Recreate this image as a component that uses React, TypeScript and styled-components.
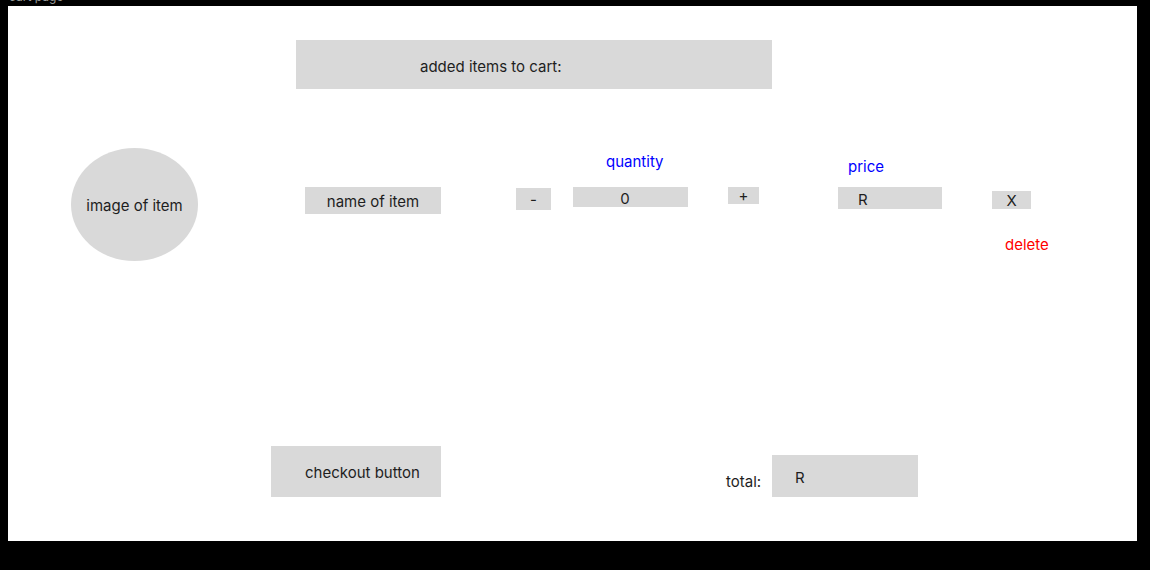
import React from "react";
import styled, { createGlobalStyle } from "styled-components";

const Global = createGlobalStyle`
  html, body { margin: 0; padding: 0; background: #000; }
  body { font-family: Inter, "Noto Sans", sans-serif; }
`;

const Page = styled.div`
  width: 1150px;
  height: 570px;
  padding: 6px 13px 29px 8px;
  box-sizing: border-box;
  background: #000;
`;

const Frame = styled.div`
  position: relative;
  width: 1129px;
  height: 535px;
  background: #fff;
  display: flex;
  flex-direction: column;
`;

const FrameLabel = styled.div`
  position: absolute;
  left: 1px;
  bottom: 100%;
  margin-bottom: 2px;
  font-size: 12px;
  line-height: 14px;
  color: #9a9a9a;
`;

const Box = styled.div<{ $w: number; $h: number; $pl?: number; $pt?: number; $center?: boolean }>`
  width: ${(p) => p.$w}px;
  height: ${(p) => p.$h}px;
  background: #d9d9d9;
  display: flex;
  align-items: center;
  justify-content: ${(p) => (p.$center ? "center" : "flex-start")};
  padding-left: ${(p) => p.$pl ?? 0}px;
  padding-top: ${(p) => p.$pt ?? 0}px;
  box-sizing: border-box;
  font-size: 15px;
  color: #1e1e1e;
  flex-shrink: 0;
`;

const Header = styled(Box)`
  margin: 34px 0 0 288px;
`;

const ItemRow = styled.div`
  display: flex;
  align-items: flex-start;
  margin-top: 59px;
`;

const Circle = styled.div`
  width: 127px;
  height: 113px;
  border-radius: 50%;
  background: #d9d9d9;
  display: flex;
  align-items: center;
  justify-content: center;
  font-size: 15px;
  color: #1e1e1e;
  margin-left: 63px;
  padding-top: 2px;
  box-sizing: border-box;
  flex-shrink: 0;
`;

const Slot = styled.div<{ $ml: number; $mt: number }>`
  margin-left: ${(p) => p.$ml}px;
  margin-top: ${(p) => p.$mt}px;
  display: flex;
  flex-direction: column;
  flex-shrink: 0;
`;

const Label = styled.div<{ $color: string; $ml: number; $mb?: number; $mt?: number }>`
  color: ${(p) => p.$color};
  font-size: 15px;
  line-height: 18px;
  margin-left: ${(p) => p.$ml}px;
  margin-bottom: ${(p) => p.$mb ?? 0}px;
  margin-top: ${(p) => p.$mt ?? 0}px;
  white-space: nowrap;
`;

const Footer = styled.div`
  display: flex;
  align-items: flex-end;
  margin-top: auto;
  margin-bottom: 44px;
`;

const Checkout = styled(Box)`
  margin-left: 263px;
`;

const TotalLabel = styled.div`
  width: 36px;
  font-size: 15px;
  line-height: 18px;
  color: #1e1e1e;
  margin-left: 285px;
  margin-right: 10px;
  margin-bottom: 6px;
  white-space: nowrap;
`;

export default function App() {
  return (
    <>
      <Global />
      <Page>
        <Frame>
          <FrameLabel>cart page</FrameLabel>
          <Header $w={476} $h={49} $pl={124} $pt={4}>added items to cart:</Header>
          <ItemRow>
            <Circle>image of item</Circle>
            <Slot $ml={107} $mt={39}>
              <Box $w={136} $h={27} $pt={1} $center>name of item</Box>
            </Slot>
            <Slot $ml={75} $mt={40}>
              <Box $w={35} $h={22} $center>-</Box>
            </Slot>
            <Slot $ml={22} $mt={5}>
              <Label $color="#0000ff" $ml={33} $mb={16}>quantity</Label>
              <Box $w={115} $h={20} $pt={2} $center style={{ paddingRight: 11 }}>0</Box>
            </Slot>
            <Slot $ml={40} $mt={39}>
              <Box $w={31} $h={17} $center>+</Box>
            </Slot>
            <Slot $ml={79} $mt={10}>
              <Label $color="#0000ff" $ml={10} $mb={11}>price</Label>
              <Box $w={104} $h={22} $pl={20} $pt={2}>R</Box>
            </Slot>
            <Slot $ml={50} $mt={43}>
              <Box $w={39} $h={18} $pt={1} $center>X</Box>
              <Label $color="#ff0000" $ml={13} $mt={27}>delete</Label>
            </Slot>
          </ItemRow>
          <Footer>
            <Checkout $w={170} $h={51} $pl={34} $pt={1}>checkout button</Checkout>
            <TotalLabel>total:</TotalLabel>
            <Box $w={146} $h={42} $pl={23} $pt={2}>R</Box>
          </Footer>
        </Frame>
      </Page>
    </>
  );
}
